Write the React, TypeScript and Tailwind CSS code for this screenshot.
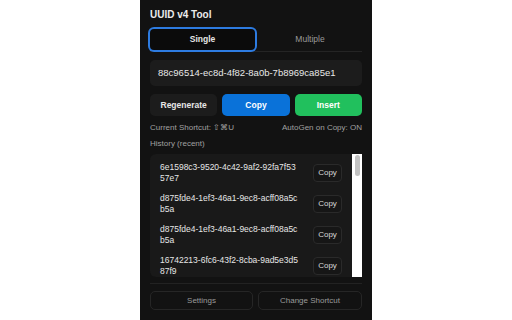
import React from "react";

const history = [
  "6e1598c3-9520-4c42-9af2-92fa7f5357e7",
  "d875fde4-1ef3-46a1-9ec8-acff08a5cb5a",
  "d875fde4-1ef3-46a1-9ec8-acff08a5cb5a",
  "16742213-6fc6-43f2-8cba-9ad5e3d587f9",
];

export default function App() {
  return (
    <div className="w-full h-[320px] bg-white flex justify-center font-['Liberation_Sans',Arial,sans-serif]">
      <div className="w-[232px] h-full bg-[#121212] flex flex-col px-[10px] pt-[8px] text-white">
        <h1 className="text-[10px] leading-[14px] font-bold text-[#ececec]">UUID v4 Tool</h1>

        {/* tabs */}
        <div className="mt-[7px] flex gap-[3px] border-b border-[#242424] pb-[1px]">
          <button className="w-[105px] h-[21px] rounded-[4px] bg-[#0b0b0b] ring-2 ring-[#2d7be0] text-[8.5px] font-bold text-[#e6e6e6]">
            Single
          </button>
          <button className="flex-1 h-[21px] text-[8.5px] text-[#9a9a9a]">Multiple</button>
        </div>

        {/* current uuid */}
        <div className="mt-[8px] h-[26px] rounded-[5px] bg-[#1c1c1c] flex items-center px-[8px] text-[9.5px] text-[#e8e8e8]">
          88c96514-ec8d-4f82-8a0b-7b8969ca85e1
        </div>

        {/* actions */}
        <div className="mt-[8px] flex gap-[5px]">
          <button className="flex-1 h-[22px] rounded-[5px] bg-[#1c1c1c] text-[8.5px] font-bold text-[#e6e6e6]">Regenerate</button>
          <button className="flex-1 h-[22px] rounded-[5px] bg-[#0a72d9] text-[8.5px] font-bold text-white">Copy</button>
          <button className="flex-1 h-[22px] rounded-[5px] bg-[#21c05d] text-[8.5px] font-bold text-white">Insert</button>
        </div>

        <div className="mt-[7px] flex justify-between text-[8px] leading-[10px] text-[#a0a0a0]">
          <span>Current Shortcut: ⇧⌘U</span>
          <span>AutoGen on Copy: ON</span>
        </div>

        <div className="mt-[6px] text-[8px] leading-[10px] text-[#a0a0a0]">History (recent)</div>

        {/* history list */}
        <div className="mt-[5px] h-[123px] flex rounded-l-[6px] bg-[#191919] overflow-hidden">
          <div className="flex-1 pt-[3px]">
            {history.map((id, i) => (
              <div key={i} className="h-[31px] flex items-center pl-[10px] pr-[10px] gap-[13px]">
                <div className="w-[140px] break-all text-[8.5px] leading-[11px] text-[#e6e6e6]">{id}</div>
                <button className="ml-auto w-[29px] h-[18px] rounded-[4px] border border-[#2a2a2a] bg-[#161616] text-[8px] text-[#d8d8d8]">
                  Copy
                </button>
              </div>
            ))}
          </div>
          <div className="w-[10px] h-full bg-white flex justify-center pt-[1px]">
            <div className="w-[5px] h-[21px] rounded-full bg-[#c2c2c2]" />
          </div>
        </div>

        <div className="mt-[6px] border-t border-[#222222]" />

        {/* footer */}
        <div className="mt-[7px] flex gap-[5px]">
          <button className="w-[103px] h-[19px] rounded-[5px] border border-[#262626] text-[8px] text-[#9a9a9a]">Settings</button>
          <button className="flex-1 h-[19px] rounded-[5px] border border-[#262626] text-[8px] text-[#9a9a9a]">Change Shortcut</button>
        </div>
      </div>
    </div>
  );
}
